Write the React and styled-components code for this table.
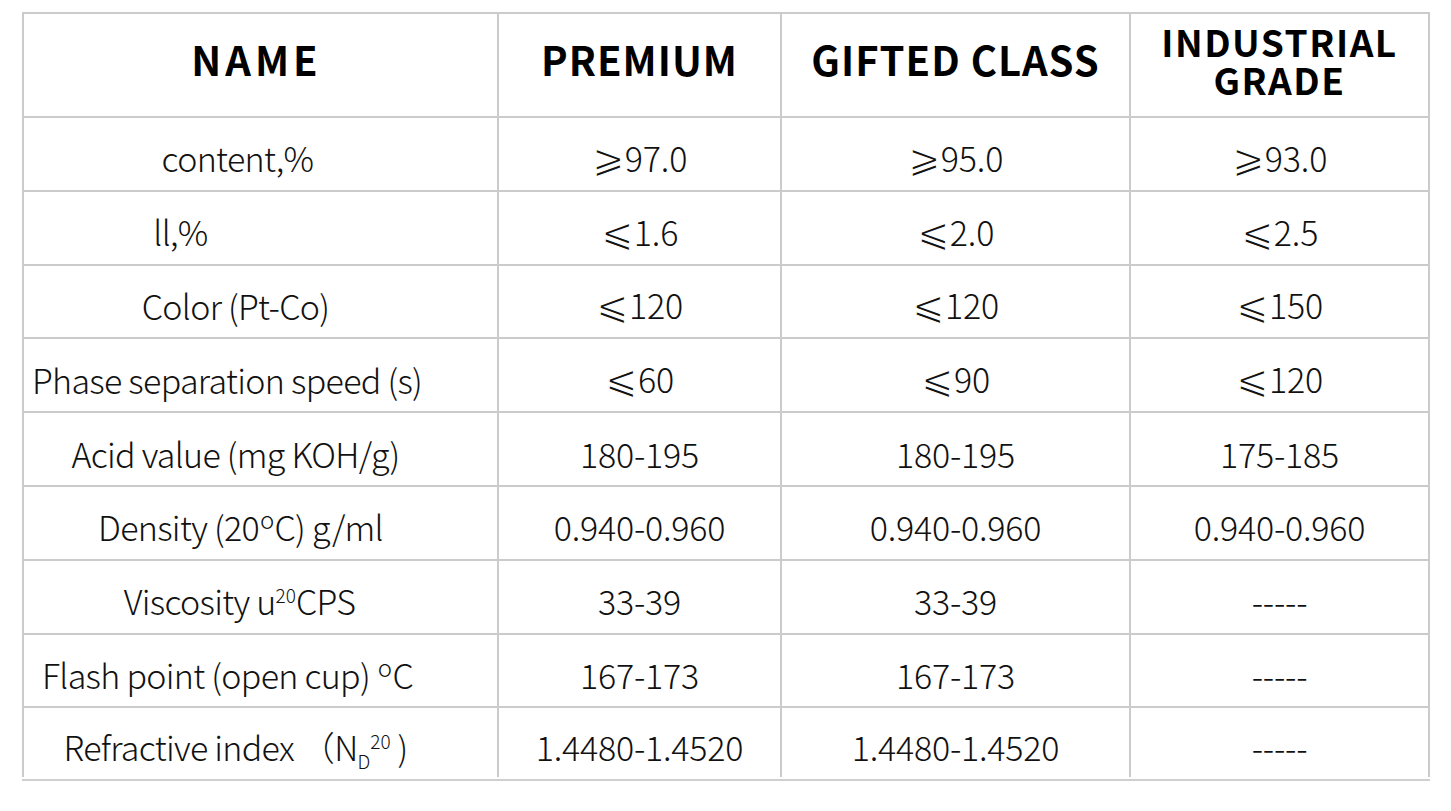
import React from 'react';
import styled, { createGlobalStyle } from 'styled-components';

const GlobalStyle = createGlobalStyle`
  html, body {
    margin: 0;
    padding: 0;
    background: #ffffff;
  }
  body {
    font-family: "Noto Sans CJK SC", "Noto Sans", "DejaVu Sans", sans-serif;
    color: #111111;
  }
`;

const Page = styled.div`
  padding: 12px 0 0 22px;
`;

const Frame = styled.div`
  width: 1408px;
  padding-bottom: 2px;
  border-bottom: 2px solid #cfcfcf;
`;

const Table = styled.table`
  width: 1408px;
  table-layout: fixed;
  border-collapse: collapse;
  border: 2px solid #cbcbcb;
  border-bottom: none;
`;

const HeadRow = styled.tr`
  height: 104px;
`;

const Head = styled.th`
  border: 2px solid #cbcbcb;
  border-top: none;
  text-align: center;
  vertical-align: middle;
  font-family: "Noto Sans CJK SC", "Noto Sans", sans-serif;
  font-weight: 700;
  font-size: ${p => (p.$tight ? '37px' : '40px')};
  line-height: ${p => (p.$tight ? '38px' : '44px')};
  letter-spacing: ${p => p.$spacing || '1px'};
  color: #000000;
  padding: ${p => (p.$tight ? '0 4px 10px' : '0 4px 12px')};
  padding-right: ${p => p.$right || '4px'};
`;

const Row = styled.tr`
  height: 73.8px;
  &:last-child {
    height: 70px;
  }
  &:last-child td {
    border-bottom: none;
  }
`;

const Cell = styled.td`
  border: 2px solid #cbcbcb;
  text-align: center;
  vertical-align: middle;
  padding: 9px 4px 0;
  font-size: 34px;
  font-weight: 300;
  letter-spacing: -0.2px;
  line-height: 44px;
  color: #111111;
  white-space: nowrap;
`;

const NameCell = styled(Cell)`
  padding: 9px 58px 0 8px;
  letter-spacing: -0.7px;
`;

const Label = styled.span`
  display: inline-block;
  margin-right: ${p => (p.$shift ? `${p.$shift}px` : '0')};
`;

const Sym = styled.span`
  font-family: "DejaVu Sans", sans-serif;
  font-size: 39px;
  letter-spacing: 0;
  -webkit-text-stroke: 1.1px #ffffff;
`;

const Sup = styled.sup`
  font-size: 19px;
  letter-spacing: 0;
  vertical-align: 12px;
  line-height: 0;
`;

const Sub = styled.sub`
  font-size: 19px;
  letter-spacing: 0;
  vertical-align: -8px;
  line-height: 0;
`;

const Deg = styled.span`
  display: inline-block;
  font-size: 24px;
  vertical-align: 12px;
  line-height: 0;
  margin: 0 1px;
`;

const ge = v => <><Sym>⩾</Sym>{v}</>;
const le = v => <><Sym>⩽</Sym>{v}</>;

const rows = [
  { name: 'content,%', shift: -4, values: [ge('97.0'), ge('95.0'), ge('93.0')] },
  { name: 'll,%', shift: 110, values: [le('1.6'), le('2.0'), le('2.5')] },
  { name: 'Color (Pt-Co)', values: [le('120'), le('120'), le('150')] },
  { name: 'Phase separation speed (s)', shift: 20, values: [le('60'), le('90'), le('120')] },
  { name: 'Acid value (mg KOH/g)', values: ['180-195', '180-195', '175-185'] },
  { name: <>Density (20<Deg>o</Deg>C) g/ml</>, shift: -10, values: ['0.940-0.960', '0.940-0.960', '0.940-0.960'] },
  { name: <>Viscosity u<Sup>20</Sup>CPS</>, shift: -8, values: ['33-39', '33-39', '-----'] },
  { name: <>Flash point (open cup) <Deg>o</Deg>C</>, shift: 16, values: ['167-173', '167-173', '-----'] },
  {
    name: <>Refractive index （N<Sub>D</Sub><Sup>20</Sup> )</>,
    values: ['1.4480-1.4520', '1.4480-1.4520', '-----'],
  },
];

export default function App() {
  return (
    <Page>
      <GlobalStyle />
      <Frame>
        <Table>
          <colgroup>
            <col style={{ width: 475 }} />
            <col style={{ width: 283 }} />
            <col style={{ width: 349 }} />
            <col style={{ width: 299 }} />
          </colgroup>
          <thead>
            <HeadRow>
              <Head $spacing="4px" $right="12px">NAME</Head>
              <Head>PREMIUM</Head>
              <Head>GIFTED CLASS</Head>
              <Head $tight $spacing="1.5px">INDUSTRIAL<br />GRADE</Head>
            </HeadRow>
          </thead>
          <tbody>
            {rows.map((row, i) => (
              <Row key={i}>
                <NameCell>
                  <Label $shift={row.shift}>{row.name}</Label>
                </NameCell>
                {row.values.map((v, j) => (
                  <Cell key={j}>{v}</Cell>
                ))}
              </Row>
            ))}
          </tbody>
        </Table>
      </Frame>
    </Page>
  );
}
